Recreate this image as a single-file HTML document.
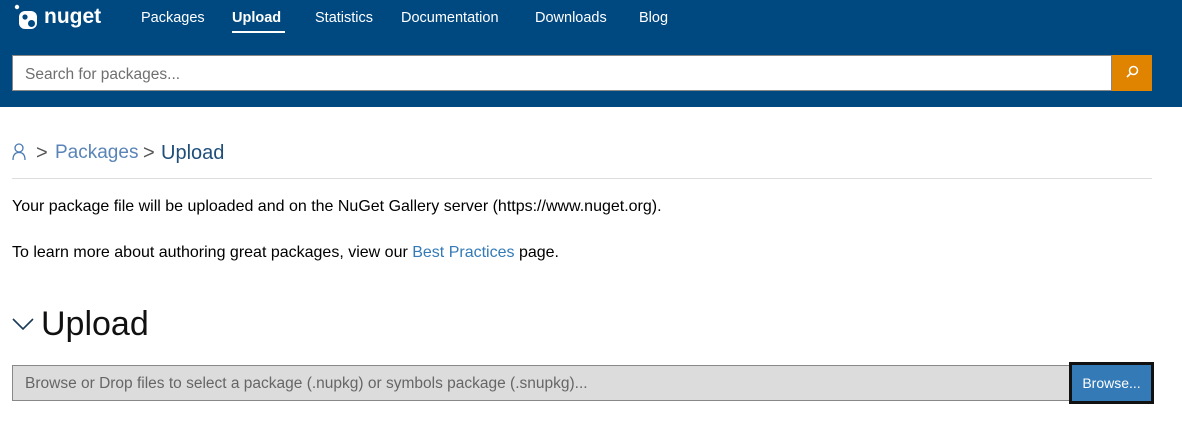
<!DOCTYPE html>
<html><head><style>
*{margin:0;padding:0;box-sizing:border-box}
body{width:1182px;height:430px;background:#fff;font-family:"Liberation Sans",sans-serif;overflow:hidden;position:relative;color:#000}
.hdr{position:absolute;left:0;top:0;width:1182px;height:107px;background:#004880}
.nav a{position:absolute;top:10px;color:#fff;font-size:14.5px;text-decoration:none}
.search{position:absolute;left:12px;top:55px;width:1100px;height:36px;background:#fff;border:1px solid #888;font-size:15.5px;color:#6f6f6f;padding:10px 12px}
.sbtn{position:absolute;left:1112px;top:55px;width:40px;height:36px;background:#e08400}
.t{position:absolute;white-space:nowrap}
</style></head><body>
<div class="hdr">
 <svg style="position:absolute;left:14px;top:4px" width="28" height="26" viewBox="0 0 28 26"><circle cx="3" cy="3" r="2.2" fill="#fff"/><rect x="5" y="7" width="18" height="18" rx="6" fill="#fff"/><circle cx="11" cy="13" r="2.6" fill="#004880"/><circle cx="17.5" cy="19.5" r="3.5" fill="#004880"/></svg>
 <div class="t" style="left:44px;top:5px;color:#fff;font-size:21px;font-weight:bold">nuget</div>
 <div class="nav">
  <a style="left:141px">Packages</a>
  <a style="left:232px;font-weight:bold">Upload</a>
  <a style="left:315px">Statistics</a>
  <a style="left:401px">Documentation</a>
  <a style="left:535px">Downloads</a>
  <a style="left:639px">Blog</a>
 </div>
 <div style="position:absolute;left:232px;top:31px;width:53px;height:2px;background:#fff"></div>
 <div class="search">Search for packages...</div>
 <div class="sbtn"><svg width="40" height="36" viewBox="0 0 40 36"><circle cx="21.5" cy="15.5" r="4" fill="none" stroke="#fff" stroke-width="1.5"/><line x1="18.5" y1="18.5" x2="15" y2="22" stroke="#fff" stroke-width="1.6"/></svg></div>
</div>
<svg style="position:absolute;left:12px;top:143px" width="14" height="18" viewBox="0 0 14 18"><circle cx="7" cy="5" r="4" fill="none" stroke="#4a7ab5" stroke-width="1.3"/><path d="M1 17 Q1 9.5 7 9.5 Q13 9.5 13 17" fill="none" stroke="#4a7ab5" stroke-width="1.3"/></svg>
<div class="t" style="left:36px;top:142px;font-size:20px;color:#555">&gt;</div>
<div class="t" style="left:55px;top:142px;font-size:19px;color:#5a84b8">Packages</div>
<div class="t" style="left:143px;top:142px;font-size:20px;color:#555">&gt;</div>
<div class="t" style="left:161px;top:142px;font-size:20px;color:#1f4e79">Upload</div>
<div style="position:absolute;left:12px;top:178px;width:1140px;height:1px;background:#ddd"></div>
<div class="t" style="left:12px;top:198px;font-size:16px">Your package file will be uploaded and on the NuGet Gallery server (https://www.nuget.org).</div>
<div class="t" style="left:12px;top:244px;font-size:16px">To learn more about authoring great packages, view our <span style="color:#337ab7">Best Practices</span> page.</div>
<svg style="position:absolute;left:12px;top:317px" width="22" height="14" viewBox="0 0 22 14"><path d="M1 2 L11 12 L21 2" fill="none" stroke="#1a3a5a" stroke-width="1.6"/></svg>
<div class="t" style="left:41px;top:305px;font-size:34px;color:#111">Upload</div>
<div style="position:absolute;left:12px;top:365px;width:1060px;height:36px;background:#dcdcdc;border:1px solid #888;border-right:none;font-size:15.5px;color:#666;padding:9px 12px">Browse or Drop files to select a package (.nupkg) or symbols package (.snupkg)...</div>
<div style="position:absolute;left:1069px;top:362px;width:85px;height:42px;background:#337ab7;border:3px solid #111;color:#fff;font-size:14px;text-align:center;line-height:36px">Browse...</div>
</body></html>
